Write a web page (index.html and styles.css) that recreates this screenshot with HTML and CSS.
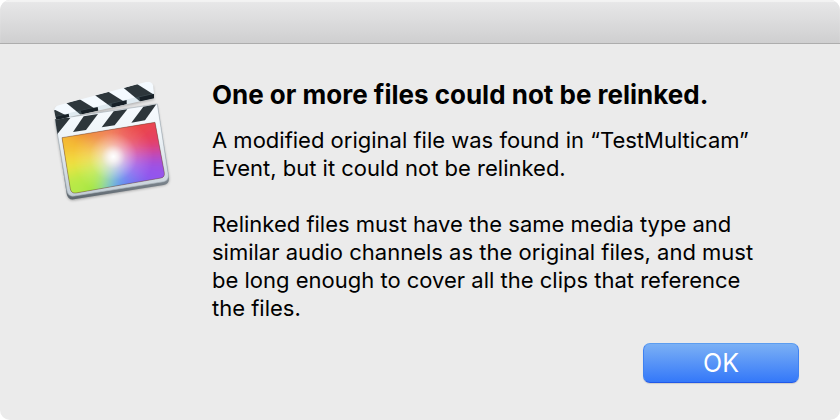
FILE: index.html
```html
<!DOCTYPE html>
<html lang="en">
<head>
<meta charset="utf-8">
<meta name="viewport" content="width=device-width, initial-scale=1">
<title>Relink Files</title>
<link rel="stylesheet" href="styles.css">
</head>
<body>
<div class="dialog" role="alertdialog" aria-labelledby="dialog-title" aria-describedby="dialog-text">
  <header class="titlebar"></header>
  <main class="content">
    <svg class="app-icon" viewBox="0 0 408 408" aria-hidden="true">
      <defs>
        <linearGradient id="frame" x1="0" y1="0" x2="0" y2="1">
          <stop offset="0" stop-color="#f7fbff"/>
          <stop offset=".35" stop-color="#eef4f8"/>
          <stop offset="1" stop-color="#c3cdd5"/>
        </linearGradient>
        <linearGradient id="edge" x1="0" y1="0" x2="0" y2="1">
          <stop offset="0" stop-color="#b9c1c8"/>
          <stop offset=".8" stop-color="#7d868e"/>
          <stop offset="1" stop-color="#5d666e"/>
        </linearGradient>
        <filter id="soft" x="-50%" y="-50%" width="200%" height="200%"><feGaussianBlur stdDeviation="24"/></filter>
        <filter id="shadow" x="-20%" y="-20%" width="140%" height="140%"><feGaussianBlur stdDeviation="5"/></filter>
        <radialGradient id="glow" gradientUnits="userSpaceOnUse" cx="208" cy="248" r="120">
          <stop offset="0" stop-color="#fff"/>
          <stop offset=".12" stop-color="#fff" stop-opacity=".85"/>
          <stop offset=".3" stop-color="#fff" stop-opacity=".5"/>
          <stop offset=".6" stop-color="#fff" stop-opacity=".16"/>
          <stop offset="1" stop-color="#fff" stop-opacity="0"/>
        </radialGradient>
        <clipPath id="screen"><path d="M54 191L333 145L361 296Q363 309 351 312L96 357Q82 359 79 345Z"/></clipPath>
        <clipPath id="arm"><path d="M31 112Q30 98 44 94L306 24Q322 20 327 34L330 57V73L38 137Q33 128 31 112Z"/></clipPath>
        <clipPath id="slate"><path d="M33 136L340 90L350 145L42 190Z"/></clipPath>
      </defs>
      <path d="M34 140L70 362Q73 381 92 378L358 334Q374 331 375 316L338 92Z" fill="#000" opacity=".35" filter="url(#shadow)"/>
      <path d="M33 105L327 35L330 77L40 142Z" fill="#000" opacity=".25" filter="url(#shadow)"/>
      <path d="M34 138L68 360Q72 379 90 376L359 333Q376 330 375 311L341 94Z" fill="url(#edge)"/>
      <path d="M33 136L340 90L373 302Q375 319 359 323L91 366Q73 369 69 351Z" fill="url(#frame)" stroke="#a8b2ba" stroke-width="2"/>
      <g clip-path="url(#slate)" fill="#2d363b">
        <path d="M33 132L79 132L42 178L36 187Z"/>
        <path d="M119 127L162 120L126 168L87 174Z"/>
        <path d="M209 112L250 106L212 154L173 160Z"/>
        <path d="M298 98L337 91L303 139L262 146Z"/>
      </g>
      <g clip-path="url(#arm)">
        <path d="M28 20H334V140H28Z" fill="#f4faff"/>
        <g fill="#2d363b">
          <path d="M26 108L34 108L78 130L36 140Z"/>
          <path d="M67 87L107 76L163 110L110 122Z"/>
          <path d="M153 64L193 53L248 88L203 100Z"/>
          <path d="M239 42L279 30L334 65V75L289 83Z"/>
        </g>
        <path d="M35 127L331 57V75L36 140Z" fill="#819eac" opacity=".18"/>
        <path d="M33 129L74 119L76 130L36 139Z M110 110L161 99L163 110L114 121Z M203 89L248 78V91L204 101Z M286 70L330 60V73L289 82Z" fill="#172027"/>
      </g>
      <g clip-path="url(#screen)">
        <path d="M45 135H370V365H45Z" fill="#ef805c"/>
        <g filter="url(#soft)">
          <path d="M208 248L-20 120L130 60Z" fill="#ed7830"/>
          <path d="M208 248L120 50L240 50Z" fill="#ef7140"/>
          <path d="M208 248L225 30L440 80Z" fill="#eb4a45"/>
          <path d="M208 248L440 60L440 245Z" fill="#e6405d"/>
          <path d="M208 248L440 220L450 310Z" fill="#b14bc7"/>
          <path d="M208 248L450 275L360 450Z" fill="#9455ed"/>
          <path d="M208 248L400 420L180 450Z" fill="#5c6df0"/>
          <path d="M208 248L255 440L175 440Z" fill="#389bed"/>
          <path d="M208 248L175 450L20 440Z" fill="#93e43f"/>
          <path d="M208 248L70 450L-40 310Z" fill="#b6e946"/>
          <path d="M208 248L-40 340L-40 210Z" fill="#f4e442"/>
          <path d="M208 248L-40 245L-20 110Z" fill="#f4bc34"/>
        </g>
        <circle cx="208" cy="248" r="120" fill="url(#glow)"/>
      </g>
      <path d="M54 191L333 145L361 296Q363 309 351 312L96 357Q82 359 79 345Z" fill="none" stroke="#4b3d35" stroke-opacity=".4" stroke-width="3"/>
    </svg>
    <section class="message">
      <h1 class="title" id="dialog-title">One or more files could not be relinked.</h1>
      <div class="text" id="dialog-text">
        <p>A modified original file was found in “TestMulticam” Event, but it could not be relinked.</p>
        <p>Relinked files must have the same media type and similar audio channels as the original files, and must be long enough to cover all the clips that reference the files.</p>
      </div>
    </section>
  </main>
  <footer class="actions"><button class="ok" type="button">OK</button></footer>
</div>
</body>
</html>
```
FILE: styles.css
```css
* { box-sizing: border-box; }

body {
  margin: 0;
  background: #fff;
  color: #000;
  font-family: Inter, "Liberation Sans", sans-serif;
}

.dialog {
  display: flex;
  flex-direction: column;
  min-height: 100vh;
  overflow: hidden;
  border-radius: 10px;
  background: #ebebeb;
}

.titlebar {
  height: 44px;
  border-bottom: 1px solid #adadad;
  background: linear-gradient(#e8e8e9, #cfcfd0);
  box-shadow: inset 0 2px 1px #f3f3f3;
}

.content {
  display: flex;
  gap: 32px;
  padding: 30px 64px 0 44px;
}

.app-icon {
  flex: none;
  width: 136px;
  height: 136px;
}

.message { flex: 1; padding-top: 4px; }

.title {
  margin: 0 0 14px;
  font-size: 26px;
  font-weight: 700;
  line-height: 34px;
}

.text {
  font-size: 22px;
  line-height: 28px;
}

.text p { margin: 0 0 28px; }
.text p:last-child { margin: 0; }

.actions {
  display: flex;
  justify-content: flex-end;
  margin-top: auto;
  padding: 20px 41px 37px;
}

.ok {
  width: 156px;
  height: 40px;
  padding: 0;
  border: 1px solid;
  border-color: #5c9df0 #3f82f2 #2058e8;
  border-radius: 7px;
  background: linear-gradient(#7bb0f5, #3478f9);
  box-shadow: 0 1px 1px #0002;
  color: #fff;
  font: 25px Inter, "Liberation Sans", sans-serif;
}
```
